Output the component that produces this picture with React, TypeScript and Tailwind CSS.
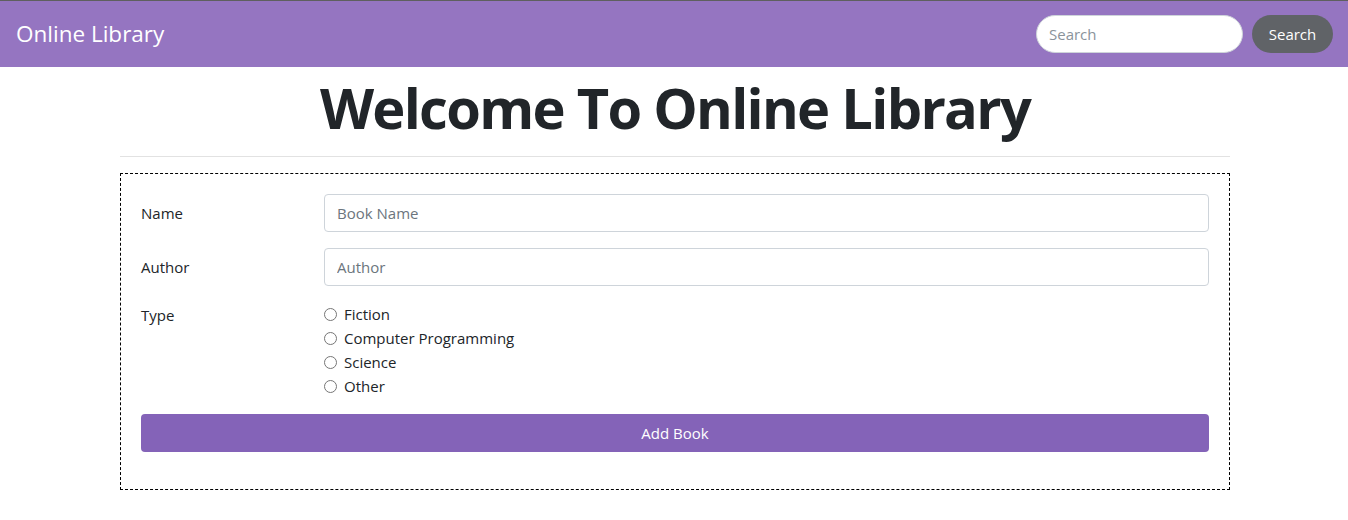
const font = { fontFamily: '"Open Sans", "Noto Sans", sans-serif' }

const types = ['Fiction', 'Computer Programming', 'Science', 'Other']

export default function App() {
    return (
        <div className="min-h-[520px] bg-white text-[#212529]" style={font}>
            <nav className="flex h-[67px] items-center justify-between border-t border-[#5f5f5f] bg-[#9575c1] pl-4 pr-[15px]">
                <a className="text-[22.5px] text-white">Online Library</a>
                <form className="flex items-center gap-[9px]">
                    <input
                        className="h-[38px] w-[207px] rounded-full border border-[#ced4da] bg-white px-3 text-[15px] text-[#495057] placeholder:text-[#8a939b] outline-none"
                        placeholder="Search"
                    />
                    <button type="button" className="h-[38px] w-[81px] rounded-full bg-[#606367] text-[15px] text-white">
                        Search
                    </button>
                </form>
            </nav>
            <main className="ml-[120px] w-[1110px]">
                <h1 className="pt-[7px] text-center text-[56px] leading-[1.2] font-bold tracking-[-1.7px]">Welcome To Online Library</h1>
                <hr className="mt-[15px] border-t border-[#e2e2e2]" />
                <div className="mt-4 border border-dashed border-black px-5 pt-5 pb-[37px]">
                    <div className="mb-4 flex items-center">
                        <label className="w-[183px] text-[15px]">Name</label>
                        <input
                            className="h-[38px] flex-1 rounded border border-[#ced4da] px-3 text-[15px] placeholder:text-[#6c757d] outline-none"
                            placeholder="Book Name"
                        />
                    </div>
                    <div className="mb-4 flex items-center">
                        <label className="w-[183px] text-[15px]">Author</label>
                        <input
                            className="h-[38px] flex-1 rounded border border-[#ced4da] px-3 text-[15px] placeholder:text-[#6c757d] outline-none"
                            placeholder="Author"
                        />
                    </div>
                    <div className="mb-4 flex">
                        <label className="w-[183px] pt-[1px] text-[15px] leading-6">Type</label>
                        <div className="flex flex-col">
                            {types.map((t) => (
                                <label key={t} className="flex items-center gap-[7px] text-[15px] leading-6">
                                    <span className="h-[13px] w-[13px] rounded-full border border-[#767676] bg-white" />
                                    {t}
                                </label>
                            ))}
                        </div>
                    </div>
                    <button type="button" className="h-[38px] w-full rounded bg-[#8463b8] text-[15px] text-white">
                        Add Book
                    </button>
                </div>
            </main>
        </div>
    )
}
